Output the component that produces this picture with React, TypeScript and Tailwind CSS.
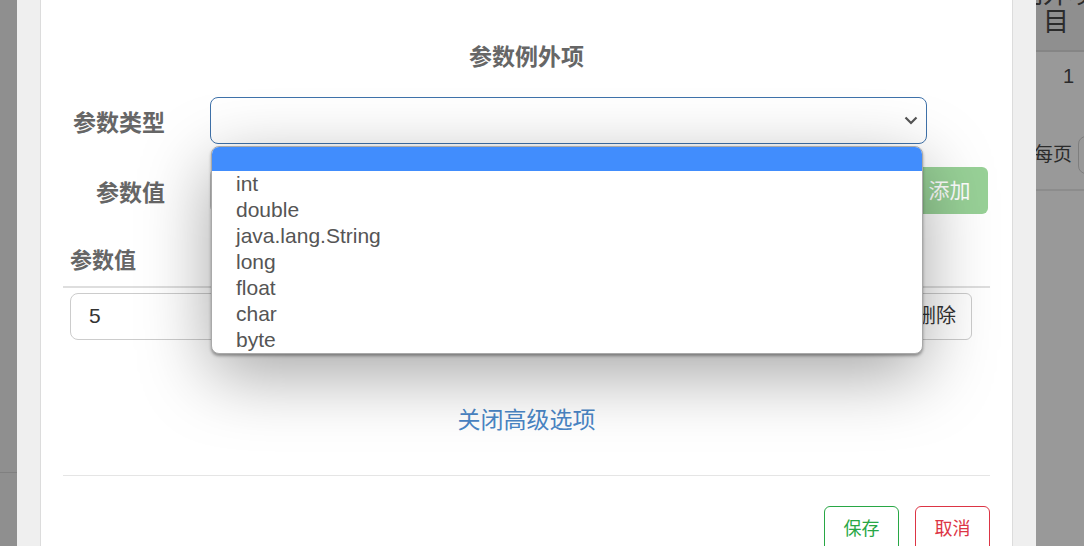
import React from 'react';

const OPTIONS = ['int', 'double', 'java.lang.String', 'long', 'float', 'char', 'byte'];

const BackdropLeft: React.FC = () => (
  <div className="w-[17px] shrink-0 bg-[#8f8f8f] flex flex-col">
    <div className="h-[473px] border-b border-[#808080]" />
  </div>
);

const BackdropRight: React.FC = () => (
  <div className="w-[48px] shrink-0 bg-[#999999] flex flex-col text-[#2b2b2b] overflow-hidden">
    <div className="h-[72px] -mt-[20px] bg-[#8f8f8f] border-b-2 border-[#858585]">
      <div className="-ml-[20px] w-[80px] flex flex-col items-center text-[26px] leading-[28px]">
        <span className="whitespace-nowrap">例外项</span>
        <span>目</span>
      </div>
    </div>
    <div className="h-[48px] flex items-center justify-end pr-[10px] text-[20px]">1</div>
    <div className="h-[91px] pt-[21px] flex items-center border-b-2 border-[#8c8c8c]">
      <span className="text-[19px] whitespace-nowrap -ml-[2px]">每页</span>
      <div className="ml-[6px] h-[38px] w-[40px] shrink-0 rounded-[8px] border border-[#7e7e7e]" />
    </div>
  </div>
);

const Dropdown: React.FC = () => (
  <div className="absolute left-[1px] top-[49px] w-[712px] z-10 bg-white border border-[#a9a9a9] rounded-[8px] overflow-hidden shadow-[0_2px_3px_rgba(0,0,0,0.35),0_20px_70px_rgba(0,0,0,0.36)]">
    <div className="h-[24px] bg-[#418dfd]" />
    {OPTIONS.map(o => (
      <div key={o} className="h-[26px] pl-[24px] text-[21px] leading-[26px] text-[#555] font-['Liberation_Sans',sans-serif]">
        {o}
      </div>
    ))}
  </div>
);

export default function App() {
  return (
    <div className="w-[1084px] h-[546px] overflow-hidden flex font-['Liberation_Sans','Noto_Sans_CJK_SC',sans-serif]">
      <BackdropLeft />
      <div className="w-[1019px] shrink-0 bg-[#efefef] px-[23px]">
        <div className="h-full bg-white border-x border-[#dcdcdc] px-[22px]">
          <h2 className="pt-[44px] h-[97px] text-center text-[23px] leading-[26px] font-bold text-[#666]">参数例外项</h2>

          <div className="flex items-center h-[47px]">
            <label className="w-[102px] text-right text-[23px] font-bold text-[#666] pt-[6px]">参数类型</label>
            <div className="relative ml-[45px] w-[717px]">
              <div className="h-[47px] rounded-[8px] border border-[#3f72aa] flex items-center justify-end pr-[8px] bg-white">
                <svg width="14" height="9" viewBox="0 0 14 9" fill="none" stroke="#555" strokeWidth="2.2">
                  <polyline points="1.5,1.5 7,7 12.5,1.5" />
                </svg>
              </div>
              <Dropdown />
            </div>
          </div>

          <div className="flex items-center h-[47px] mt-[23px]">
            <label className="w-[102px] text-right text-[23px] font-bold text-[#666] pt-[6px]">参数值</label>
            <div className="ml-[45px] w-[695px] h-[47px] rounded-[8px] border border-[#ccc]" />
            <button className="ml-[10px] w-[73px] h-[47px] rounded-[6px] bg-[#98d197] text-white text-[21px] pr-[4px]">添加</button>
          </div>

          <div className="mt-[34px] border-b-2 border-[#dedede] h-[40px] pl-[7px] text-[22px] font-bold text-[#666] leading-[26px]">
            参数值
          </div>
          <div className="flex items-center h-[56px] px-[7px]">
            <div className="w-[826px] h-[47px] rounded-[8px] border border-[#ccc] flex items-center pl-[18px] text-[21px] text-[#333]">5</div>
            <button className="ml-[8px] w-[68px] h-[47px] rounded-[6px] border border-[#ccc] text-[20px] text-[#333] bg-white pr-[4px]">删除</button>
          </div>

          <div className="h-[132px] flex items-center justify-center border-b border-[#e5e5e5] pt-[22px]">
            <span className="text-[23px] text-[#4a86c6]">关闭高级选项</span>
          </div>

          <div className="flex justify-end gap-[16px] pt-[30px]">
            <button className="w-[75px] h-[46px] rounded-[6px] border border-[#28a745] text-[#28a745] text-[18px]">保存</button>
            <button className="w-[75px] h-[46px] rounded-[6px] border border-[#dc3545] text-[#dc3545] text-[18px]">取消</button>
          </div>
        </div>
      </div>
      <BackdropRight />
    </div>
  );
}
